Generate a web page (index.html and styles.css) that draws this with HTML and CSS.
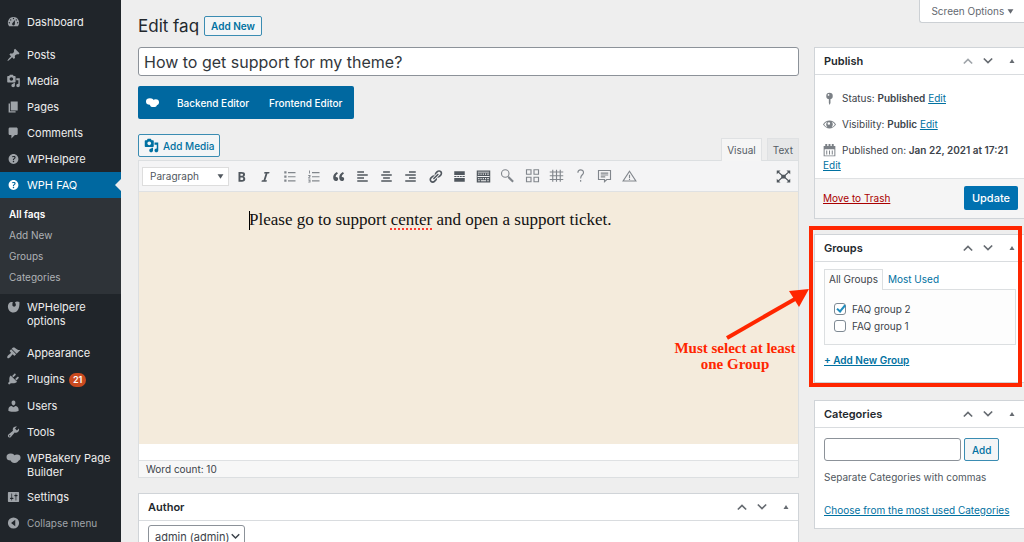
FILE: index.html
```html
<!DOCTYPE html>
<html lang="en">
<head>
<meta charset="utf-8">
<title>Edit faq</title>
<link rel="stylesheet" href="styles.css">
</head>
<body>
<svg class="sprite" aria-hidden="true">
  <symbol id="dashboard" viewBox="0 0 20 20"><path fill-rule="evenodd" d="M3.76 16h12.48A7.998 7.998 0 0 0 10 3a7.998 7.998 0 0 0-6.24 13zM10 4c.55 0 1 .45 1 1s-.45 1-1 1-1-.45-1-1 .45-1 1-1zM6 6c.55 0 1 .45 1 1s-.45 1-1 1-1-.45-1-1 .45-1 1-1zm8 0c.55 0 1 .45 1 1s-.45 1-1 1-1-.45-1-1 .45-1 1-1zm-5.37 5.55L12 7v6c0 1.1-.9 2-2 2s-2-.9-2-2c0-.57.24-1.08.63-1.45zM4 10c.55 0 1 .45 1 1s-.45 1-1 1-1-.45-1-1 .45-1 1-1zm12 0c.55 0 1 .45 1 1s-.45 1-1 1-1-.45-1-1 .45-1 1-1z"/></symbol>
  <symbol id="pin" viewBox="0 0 20 20"><path d="M10.44 3.02l1.82-1.82 6.36 6.35-1.83 1.82c-1.05-.68-2.48-.57-3.41.36l-.75.75c-.92.93-1.04 2.35-.35 3.41l-1.83 1.82-2.41-2.41-2.8 2.79c-.42.42-3.38 2.71-3.8 2.29s1.86-3.39 2.28-3.81l2.79-2.79L4.1 9.36l1.83-1.82c1.05.69 2.48.57 3.4-.36l.75-.75c.93-.92 1.05-2.35.36-3.41z"/></symbol>
  <symbol id="media" viewBox="0 0 20 20"><path fill-rule="evenodd" d="M13 11V4c0-.55-.45-1-1-1h-1.67L9 1H5L3.67 3H2c-.55 0-1 .45-1 1v7c0 .55.45 1 1 1h10c.55 0 1-.45 1-1zM7 4.5c1.38 0 2.5 1.12 2.5 2.5S8.38 9.5 7 9.5 4.5 8.38 4.5 7 5.62 4.5 7 4.5zM14 6h5v10.5c0 1.38-1.12 2.5-2.5 2.5S14 17.88 14 16.5s1.12-2.5 2.5-2.5c.17 0 .34.02.5.05V9h-3V6zm-4 8.05V13h2v3.5c0 1.38-1.12 2.5-2.5 2.5S7 17.88 7 16.5 8.12 14 9.5 14c.17 0 .34.02.5.05z"/></symbol>
  <symbol id="page" viewBox="0 0 20 20"><path d="M6 15V2h10v13H6zm-1 1h8v2H3V5h2v11z"/></symbol>
  <symbol id="comment" viewBox="0 0 20 20"><path d="M5 2h9c1.1 0 2 .9 2 2v7c0 1.1-.9 2-2 2h-2l-5 5v-5H5c-1.1 0-2-.9-2-2V4c0-1.1.9-2 2-2z"/></symbol>
  <symbol id="help" viewBox="0 0 20 20"><path fill-rule="evenodd" d="M17 10c0-3.87-3.14-7-7-7-3.87 0-7 3.13-7 7s3.13 7 7 7c3.86 0 7-3.13 7-7zm-6.3 1.48H9.14v-.43c0-.38.08-.7.24-.98s.46-.57.88-.89c.41-.29.68-.53.81-.71.14-.18.2-.39.2-.62 0-.25-.09-.44-.28-.58-.19-.13-.45-.19-.79-.19-.58 0-1.25.19-2 .57l-.64-1.28c.87-.49 1.8-.74 2.77-.74.81 0 1.45.2 1.92.58.48.39.71.91.71 1.55 0 .43-.09.8-.29 1.11-.19.32-.57.67-1.11 1.06-.38.28-.61.49-.71.63-.1.15-.15.34-.15.57v.35zm-1.47 2.74c-.18-.17-.27-.42-.27-.73 0-.33.08-.58.26-.75s.43-.25.77-.25c.32 0 .57.09.75.26s.27.42.27.74c0 .3-.09.55-.27.72-.18.18-.43.27-.75.27-.33 0-.58-.09-.76-.26z"/></symbol>
  <symbol id="options" viewBox="0 0 20 20"><path d="M9 3C5 2 2 5 2 9c0 5 3 9 8 9 6 0 9-6 8.500-15-2-1-5-1-6.500.5 1.500 1.500 2 4 .5 5.500-1.500 1.300-3.500.5-4-1C8.200 6.500 8.500 4.500 9 3z"/></symbol>
  <symbol id="brush" viewBox="0 0 20 20"><path d="M14.48 11.06L7.41 3.99l1.5-1.5c.5-.56 2.3-.47 3.51.32 1.21.8 1.43 1.28 2.91 2.1 1.18.64 2.45 1.26 4.45.85zm-.71.71L6.7 4.7 4.93 6.47c-.39.39-.39 1.02 0 1.41l1.06 1.06c.39.39.39 1.03 0 1.42-.6.6-1.43 1.11-2.21 1.69-.35.26-.7.53-1.01.84C1.43 14.23.4 16.08 1.4 17.07c.99 1 2.84-.03 4.18-1.36.31-.31.58-.66.85-1.02.57-.78 1.08-1.61 1.69-2.21.39-.39 1.02-.39 1.41 0l1.06 1.06c.39.39 1.02.39 1.41 0z"/></symbol>
  <symbol id="plug" viewBox="0 0 20 20"><path d="M13.11 4.36L9.87 7.6 8 5.73l3.24-3.24c.35-.34 1.05-.2 1.56.32.52.51.66 1.21.31 1.55zm-8 1.77l.91-1.12 9.01 9.01-1.19.84c-.71.71-2.63 1.16-3.82 1.16H6.14L4.9 17.26c-.59.59-1.54.59-2.12 0-.59-.58-.59-1.53 0-2.12l1.24-1.24v-3.88c0-1.13.4-3.19 1.09-3.89zm7.26 3.97l3.24-3.24c.34-.35 1.04-.21 1.55.31.52.51.66 1.21.31 1.55l-3.24 3.25z"/></symbol>
  <symbol id="user" viewBox="0 0 20 20"><path d="M10 9.25c-2.27 0-2.73-3.44-2.73-3.44C7 4.02 7.82 2 9.97 2c2.16 0 2.98 2.02 2.71 3.81 0 0-.41 3.44-2.68 3.44zm0 2.57L12.72 10c2.39 0 4.52 2.33 4.52 4.53v2.49s-3.65 1.13-7.24 1.13c-3.65 0-7.24-1.13-7.24-1.13v-2.49c0-2.25 1.94-4.48 4.47-4.48z"/></symbol>
  <symbol id="wrench" viewBox="0 0 20 20"><path fill-rule="evenodd" d="M16.68 9.77c-1.34 1.34-3.3 1.67-4.95.99l-5.41 6.52c-.99.99-2.59.99-3.58 0s-.99-2.59 0-3.57l6.52-5.42c-.68-1.65-.35-3.61.99-4.95 1.28-1.28 3.12-1.62 4.72-1.06l-2.89 2.89 2.82 2.82 2.86-2.87c.53 1.58.18 3.39-1.08 4.65zM3.81 16.21c.4.39 1.04.39 1.43 0 .4-.4.4-1.04 0-1.43-.39-.4-1.03-.4-1.43 0-.39.39-.39 1.03 0 1.43z"/></symbol>
  <symbol id="bakery" viewBox="0 0 20 20"><ellipse cx="6" cy="8.500" rx="6" ry="5"/><ellipse cx="15" cy="9.500" rx="5" ry="4.500"/><ellipse cx="11.500" cy="12.500" rx="5.500" ry="4.500"/></symbol>
  <symbol id="sliders" viewBox="0 0 20 20"><path fill-rule="evenodd" d="M18 16V4c0-.55-.45-1-1-1H3c-.55 0-1 .45-1 1v12c0 .55.45 1 1 1h14c.55 0 1-.45 1-1zM8 11h1c.55 0 1 .45 1 1s-.45 1-1 1H8v1.5c0 .28-.22.5-.5.5s-.5-.22-.5-.5V13H6c-.55 0-1-.45-1-1s.45-1 1-1h1V5.500c0-.28.22-.5.5-.5s.5.22.5.5V11zm5-2h-1c-.55 0-1-.45-1-1s.45-1 1-1h1V5.500c0-.28.22-.5.5-.5s.5.22.5.5V7h1c.55 0 1 .45 1 1s-.45 1-1 1h-1v5.500c0 .28-.22.5-.5.5s-.5-.22-.5-.5V9z"/></symbol>
  <symbol id="collapse" viewBox="0 0 20 20"><path fill-rule="evenodd" d="M10 2a8 8 0 1 0 0 16 8 8 0 0 0 0-16zm2.500 3.500v9L6.500 10z"/></symbol>
  <symbol id="bold" viewBox="0 0 20 20"><path fill-rule="evenodd" d="M6 4v13h4.54c1.37 0 2.46-.33 3.26-1 .8-.66 1.2-1.58 1.2-2.77 0-.84-.17-1.51-.51-2.01s-.9-.85-1.67-1.03v-.09c.57-.1 1.02-.4 1.36-.9s.51-1.13.51-1.91c0-1.14-.39-1.98-1.17-2.5C12.75 4.26 11.5 4 9.78 4H6zm2.57 5.15V6.26h1.36c.73 0 1.27.11 1.61.32.34.22.51.58.51 1.07 0 .54-.16.92-.47 1.15s-.82.35-1.51.35h-1.5zm0 2.19h1.6c1.44 0 2.16.53 2.16 1.61 0 .6-.17 1.05-.51 1.34s-.86.43-1.57.43H8.57v-3.38z"/></symbol>
  <symbol id="italic" viewBox="0 0 20 20"><path d="M14.78 6h-2.130l-2.800 9h2.120l-.62 2H4.600l.62-2h2.140l2.800-9H8.030l.62-2h6.750z"/></symbol>
  <symbol id="bullets" viewBox="0 0 20 20"><path d="M3 3h3v3H3zM3 8.500h3v3H3zM3 14h3v3H3zM8 4h10v1.500H8zM8 9.500h10V11H8zM8 15h10v1.500H8z"/></symbol>
  <symbol id="numbers" viewBox="0 0 20 20"><path d="M4 2h1.200v4H4zM3 8h3v2l-1.500 1.500H6v1H3v-1.300L4.800 9.200H3zM3 14h3v4H3v-1h1.800v-.6H3.500v-1h1.300V15H3zM8 4h10v1.500H8zM8 9.500h10V11H8zM8 15h10v1.500H8z"/></symbol>
  <symbol id="quote" viewBox="0 0 20 20"><path d="M9.49 13.22c0-.74-.2-1.38-.61-1.9-.62-.78-1.83-.88-2.53-.72-.29-1.65 1.11-3.75 2.92-4.65L7.88 4c-2.73 1.3-5.42 4.28-4.96 8.05C3.21 14.43 4.59 16 6.54 16c.85 0 1.56-.25 2.12-.75s.83-1.18.83-2.03zm8.05 0c0-.74-.2-1.38-.61-1.9-.63-.78-1.83-.88-2.53-.72-.29-1.65 1.11-3.75 2.92-4.65L15.93 4c-2.73 1.3-5.41 4.28-4.95 8.05.29 2.38 1.66 3.95 3.61 3.95.85 0 1.56-.25 2.12-.75s.83-1.18.83-2.03z"/></symbol>
  <symbol id="left" viewBox="0 0 20 20"><path d="M3 3h9v2H3zM3 7h14v2H3zM3 11h9v2H3zM3 15h14v2H3z"/></symbol>
  <symbol id="center" viewBox="0 0 20 20"><path d="M5.500 3h9v2h-9zM3 7h14v2H3zM5.500 11h9v2h-9zM3 15h14v2H3z"/></symbol>
  <symbol id="right" viewBox="0 0 20 20"><path d="M8 3h9v2H8zM3 7h14v2H3zM8 11h9v2H8zM3 15h14v2H3z"/></symbol>
  <symbol id="link" viewBox="0 0 20 20"><path d="M17.74 2.76c1.68 1.69 1.68 4.41 0 6.1l-1.53 1.52c-1.12 1.12-2.7 1.47-4.14 1.09l2.62-2.61.76-.77.76-.76c.84-.84.84-2.2 0-3.04-.84-.85-2.2-.85-3.04 0l-.77.76-3.38 3.38c-.37-1.44-.02-3.02 1.1-4.14l1.52-1.53c1.69-1.68 4.42-1.68 6.1 0zM8.59 13.43l5.34-5.34c.42-.42.42-1.1 0-1.52-.44-.43-1.13-.39-1.53 0l-5.33 5.34c-.42.42-.42 1.1 0 1.52.44.43 1.13.39 1.52 0zm-.76 2.29l4.14-4.15c.38 1.44.03 3.02-1.09 4.14l-1.52 1.53c-1.69 1.68-4.41 1.68-6.1 0-1.68-1.68-1.68-4.42 0-6.1l1.53-1.52c1.12-1.12 2.7-1.47 4.14-1.1l-4.14 4.15c-.85.84-.85 2.2 0 3.05.84.84 2.2.84 3.04 0z"/></symbol>
  <symbol id="more" viewBox="0 0 20 20"><path d="M3 3h14v5H3zM3 12h14v5H3zM3 9.200h3v1.600H3zM7 9.200h2.500v1.600H7zM10.500 9.200H13v1.600h-2.500zM14 9.200h3v1.600h-3z"/></symbol>
  <symbol id="keyboard" viewBox="0 0 20 20"><path fill-rule="evenodd" d="M1 2h18v16H1zM2.500 3.500v1h15v-1zM3 6v1.500h1.500V6zM6 6v1.500h1.500V6zM9 6v1.500h1.500V6zM12 6v1.500h1.500V6zM15 6v1.500h2V6zM2 9.200v1.300h16V9.200zM3 12v1.500h1.500V12zM6 12v1.500h1.500V12zM9 12v1.500h1.500V12zM12 12v1.500h1.500V12zM15 12v1.500h2V12zM3 15v1.300h2V15zM6.500 15v1.300h7V15zM15 15v1.300h2V15z"/></symbol>
  <symbol id="search" viewBox="0 0 20 20"><circle cx="7" cy="6" r="5" fill="none" stroke="currentColor" stroke-width="1.500"/><path d="M10.500 9.500l2 .5 6 6-2 2-6-6z"/></symbol>
  <symbol id="blocks" viewBox="0 0 20 20"><path fill="none" stroke="currentColor" stroke-width="1.500" d="M2 1h6v6H2zM12 1h6v6h-6zM2 11h6v6H2zM12 11h6v6h-6z"/></symbol>
  <symbol id="grid" viewBox="0 0 20 20"><path fill="none" stroke="currentColor" stroke-width="1.500" d="M5 1v16M10 1v16M15 1v16M1 4h18M1 9h18M1 14h18"/></symbol>
  <symbol id="question" viewBox="0 0 20 20"><path fill="none" stroke="currentColor" stroke-width="1.500" d="M6.500 5c0-5 7.500-5 7.500-.5 0 3.500-3.800 3-3.800 8M10.200 14.500v2.500"/></symbol>
  <symbol id="note" viewBox="0 0 20 20"><path fill="none" stroke="currentColor" stroke-width="1.500" d="M2 2h16v12h-5l-3 3v-3H2zM5 5.500h10M5 8h10M5 10.500h6"/></symbol>
  <symbol id="warning" viewBox="0 0 20 20"><path fill="none" stroke="currentColor" stroke-width="1.500" d="M10 3l8.500 13h-17zM10 7.500V12M10 13v1.500"/></symbol>
  <symbol id="fullscreen" viewBox="0 0 20 20"><path d="M1 2h5L1 7zM19 2v5l-5-5zM1 18v-5l5 5zM19 18h-5l5-5zM7 7.500h6v5H7z"/><path fill="none" stroke="currentColor" stroke-width="1.600" d="M3 4l5 4.500M17 4l-5 4.500M3 16l5-4.500M17 16l-5-4.500"/></symbol>
  <symbol id="status" viewBox="0 0 20 20"><circle cx="10" cy="6" r="5"/><path d="M9 10h2.500v7l-1.500 3-1-3z"/><circle cx="8.500" cy="4.500" r="1.300" fill="#fff"/></symbol>
  <symbol id="eye" viewBox="0 0 20 20"><path fill-rule="evenodd" d="M0 10c2.200-3.700 6-6 10-6s7.800 2.300 10 6c-2.200 3.700-6 6-10 6S2.200 13.700 0 10zm1.800 0c1.200 2 3 3.400 5 4.100-2.600-2.400-2.600-5.800 0-8.200-2 .7-3.800 2.100-5 4.100zm16.400 0c-1.200-2-3-3.400-5-4.100 2.600 2.400 2.600 5.800 0 8.200 2-.7 3.800-2.100 5-4.100zM9 6.500a2 2 0 1 0 0 4 2 2 0 0 0 0-4z"/></symbol>
  <symbol id="calendar" viewBox="0 0 20 20"><path fill-rule="evenodd" d="M1 3h2.500V0h3v3h2V0h3v3h2V0h3v3H19v16H1zm1.500 5v9.500h15V8zM5 10h1.500v6H5zM9.300 10h1.500v6H9.300zM13.500 10H15v6h-1.500z"/></symbol>
  <symbol id="up" viewBox="0 0 12 12"><path fill="none" stroke="currentColor" stroke-width="2" d="M1 9l5-5 5 5"/></symbol>
  <symbol id="down" viewBox="0 0 12 12"><path fill="none" stroke="currentColor" stroke-width="2" d="M1 3l5 5 5-5"/></symbol>
  <symbol id="tri-up" viewBox="0 0 12 12"><path d="M6 2l5 8H1z"/></symbol>
  <symbol id="tri-down" viewBox="0 0 12 12"><path d="M1 2h10L6 10z"/></symbol>
</svg>
<div class="app">
  <nav class="sidebar" aria-label="Main menu">
    <a class="item" href="#"><svg class="icon"><use href="#dashboard"/></svg><span>Dashboard</span></a>
    <a class="item section" href="#"><svg class="icon"><use href="#pin"/></svg><span>Posts</span></a>
    <a class="item" href="#"><svg class="icon"><use href="#media"/></svg><span>Media</span></a>
    <a class="item" href="#"><svg class="icon"><use href="#page"/></svg><span>Pages</span></a>
    <a class="item" href="#"><svg class="icon"><use href="#comment"/></svg><span>Comments</span></a>
    <a class="item" href="#"><svg class="icon"><use href="#help"/></svg><span>WPHelpere</span></a>
    <a class="item current" href="#"><svg class="icon"><use href="#help"/></svg><span>WPH FAQ</span></a>
    <div class="submenu">
      <a class="active" href="#">All faqs</a>
      <a href="#">Add New</a>
      <a href="#">Groups</a>
      <a href="#">Categories</a>
    </div>
    <a class="item tall" href="#"><svg class="icon"><use href="#options"/></svg><span>WPHelpere options</span></a>
    <a class="item section" href="#"><svg class="icon"><use href="#brush"/></svg><span>Appearance</span></a>
    <a class="item" href="#"><svg class="icon"><use href="#plug"/></svg><span>Plugins <b class="count">21</b></span></a>
    <a class="item" href="#"><svg class="icon"><use href="#user"/></svg><span>Users</span></a>
    <a class="item" href="#"><svg class="icon"><use href="#wrench"/></svg><span>Tools</span></a>
    <a class="item tall" href="#"><svg class="icon"><use href="#bakery"/></svg><span>WPBakery Page Builder</span></a>
    <a class="item" href="#"><svg class="icon"><use href="#sliders"/></svg><span>Settings</span></a>
    <button class="item collapse" type="button"><svg class="icon"><use href="#collapse"/></svg><span>Collapse menu</span></button>
  </nav>

  <div class="content">
    <main class="primary">
      <header class="heading">
        <h1>Edit faq</h1>
        <a class="button small" href="#">Add New</a>
      </header>
      <input class="title" type="text" aria-label="Title" value="How to get support for my theme?">
      <div class="switcher">
        <svg class="icon"><use href="#bakery"/></svg>
        <button type="button">Backend Editor</button>
        <button type="button">Frontend Editor</button>
      </div>

      <section class="editor">
        <div class="editor-top">
          <button class="button add-media" type="button"><svg class="icon"><use href="#media"/></svg>Add Media</button>
          <div class="modes">
            <button class="mode on" type="button">Visual</button>
            <button class="mode" type="button">Text</button>
          </div>
        </div>
        <div class="frame">
          <div class="toolbar">
            <div class="format">
              <select aria-label="Format"><option>Paragraph</option></select>
              <svg><use href="#tri-down"/></svg>
            </div>
            <div class="tools">
              <button type="button" aria-label="Bold"><svg><use href="#bold"/></svg></button>
              <button type="button" aria-label="Italic"><svg><use href="#italic"/></svg></button>
              <button class="thin" type="button" aria-label="Bulleted list"><svg><use href="#bullets"/></svg></button>
              <button class="thin" type="button" aria-label="Numbered list"><svg><use href="#numbers"/></svg></button>
              <button type="button" aria-label="Blockquote"><svg><use href="#quote"/></svg></button>
              <button type="button" aria-label="Align left"><svg><use href="#left"/></svg></button>
              <button type="button" aria-label="Align center"><svg><use href="#center"/></svg></button>
              <button type="button" aria-label="Align right"><svg><use href="#right"/></svg></button>
              <button type="button" aria-label="Link"><svg><use href="#link"/></svg></button>
              <button type="button" aria-label="Read more"><svg><use href="#more"/></svg></button>
              <button type="button" aria-label="Toolbar toggle"><svg><use href="#keyboard"/></svg></button>
              <button class="thin" type="button" aria-label="Find"><svg><use href="#search"/></svg></button>
              <button class="thin" type="button" aria-label="Blocks"><svg><use href="#blocks"/></svg></button>
              <button class="thin" type="button" aria-label="Grid"><svg><use href="#grid"/></svg></button>
              <button class="thin" type="button" aria-label="Help"><svg><use href="#question"/></svg></button>
              <button class="thin" type="button" aria-label="Note"><svg><use href="#note"/></svg></button>
              <button class="thin" type="button" aria-label="Warning"><svg><use href="#warning"/></svg></button>
            </div>
            <button class="full" type="button" aria-label="Fullscreen"><svg><use href="#fullscreen"/></svg></button>
          </div>
          <div class="canvas">
            <p><span class="caret"></span>Please go to support <span class="typo">center</span> and open a support ticket.</p>
          </div>
          <div class="status">Word count: 10</div>
        </div>
      </section>

      <section class="box author">
        <div class="box-head">
          <h2>Author</h2>
          <div class="handles">
            <button type="button" aria-label="Move up"><svg><use href="#up"/></svg></button>
            <button type="button" aria-label="Move down"><svg><use href="#down"/></svg></button>
            <button type="button" aria-label="Toggle"><svg><use href="#tri-up"/></svg></button>
          </div>
        </div>
        <div class="author-body">
          <div class="picker">
            <select aria-label="Author"><option>admin (admin)</option></select>
            <svg><use href="#down"/></svg>
          </div>
        </div>
      </section>
    </main>

    <aside class="side">
      <button class="screen-options" type="button">Screen Options <svg><use href="#tri-down"/></svg></button>

      <section class="box">
        <div class="box-head">
          <h2>Publish</h2>
          <div class="handles">
            <button class="dim" type="button" aria-label="Move up"><svg><use href="#up"/></svg></button>
            <button type="button" aria-label="Move down"><svg><use href="#down"/></svg></button>
            <button type="button" aria-label="Toggle"><svg><use href="#tri-up"/></svg></button>
          </div>
        </div>
        <div class="publish">
          <p><svg class="icon"><use href="#status"/></svg>Status: <b>Published</b> <a href="#">Edit</a></p>
          <p><svg class="icon"><use href="#eye"/></svg>Visibility: <b>Public</b> <a href="#">Edit</a></p>
          <p><svg class="icon"><use href="#calendar"/></svg>Published on: <b>Jan 22, 2021 at 17:21</b> <a href="#">Edit</a></p>
        </div>
        <div class="publish-foot">
          <a class="trash" href="#">Move to Trash</a>
          <button class="update" type="button">Update</button>
        </div>
      </section>

      <section class="box groups">
        <div class="box-head">
          <h2>Groups</h2>
          <div class="handles">
            <button type="button" aria-label="Move up"><svg><use href="#up"/></svg></button>
            <button type="button" aria-label="Move down"><svg><use href="#down"/></svg></button>
            <button type="button" aria-label="Toggle"><svg><use href="#tri-up"/></svg></button>
          </div>
        </div>
        <div class="groups-body">
          <div class="tabs">
            <a class="tab on" href="#">All Groups</a>
            <a class="tab" href="#">Most Used</a>
          </div>
          <div class="panel">
            <label><input type="checkbox" checked>FAQ group 2</label>
            <label><input type="checkbox">FAQ group 1</label>
          </div>
          <a class="add-group" href="#">+ Add New Group</a>
        </div>
        <div class="highlight"></div>
        <svg class="arrow" viewBox="0 0 84 52"><path d="M2 50L70 11" fill="none" stroke="#ff2600" stroke-width="4"/><path d="M84 1L64 3l10 16z" fill="#ff2600"/></svg>
        <p class="note">Must select at least one Group</p>
      </section>

      <section class="box">
        <div class="box-head">
          <h2>Categories</h2>
          <div class="handles">
            <button type="button" aria-label="Move up"><svg><use href="#up"/></svg></button>
            <button type="button" aria-label="Move down"><svg><use href="#down"/></svg></button>
            <button type="button" aria-label="Toggle"><svg><use href="#tri-up"/></svg></button>
          </div>
        </div>
        <div class="categories">
          <div class="add-row">
            <input type="text" aria-label="Add Categories">
            <button class="button" type="button">Add</button>
          </div>
          <p>Separate Categories with commas</p>
          <a href="#">Choose from the most used Categories</a>
        </div>
      </section>
    </aside>
  </div>
</div>
</body>
</html>
```
FILE: styles.css
```css
* { box-sizing: border-box; }
body { margin: 0; background: #eee; color: #3c434a; font: 10px/14px Inter, "Liberation Sans", sans-serif; }
button, input, select { font: inherit; color: inherit; margin: 0; }
button { cursor: pointer; }
h1, h2, p { margin: 0; font-weight: 400; }
a { color: #0071a1; }
svg { fill: currentColor; flex: none; }
.sprite { position: absolute; width: 0; height: 0; }
.icon { width: 15px; height: 15px; }
.app { display: flex; height: 100vh; overflow: hidden; }

.sidebar { width: 121px; flex: none; background: #20252a; padding-top: 9px; }
.item { display: flex; width: 100%; gap: 6px; padding: 6px 8px 6px 6px; border: 0; background: none; color: #eee; font-size: 11px; line-height: 14px; text-align: left; text-decoration: none; }
.item .icon { height: 14px; color: #9ea3a8; }
.tall { padding-bottom: 5px; }
.section { margin-top: 7px; }
.current { position: relative; background: #0068a0; color: #fff; }
.current .icon { color: #fff; }
.current::after { content: ""; position: absolute; right: 0; top: 7px; border: 6px solid transparent; border-left: 0; border-right-color: #eee; }
.submenu { background: #2e3338; padding: 6px 9px; display: flex; flex-direction: column; font-size: 10px; line-height: 21px; }
.submenu a { color: #aeb2b6; text-decoration: none; }
.submenu .active { color: #fff; font-weight: 600; }
.count { display: inline-block; background: #ca4a1f; color: #fff; border-radius: 7px; padding: 0 4px; margin-left: 1px; font-size: 9px; font-weight: 600; }
.collapse { color: #a0a5aa; font-size: 10px; }

.content { flex: 1; min-width: 0; display: flex; gap: 15px; padding-left: 17px; }
.primary { flex: 1; min-width: 0; padding-top: 15px; }
.heading { display: flex; align-items: center; gap: 5px; height: 22px; margin-bottom: 10px; }
h1 { font-size: 17px; line-height: 22px; color: #23282d; }
.button { border: 1px solid #3a8cb2; border-radius: 2px; background: #f3f5f6; color: #0071a1; text-decoration: none; font-weight: 500; }
.small { padding: 2px 6px; font-weight: 600; }
.title { display: block; width: 100%; height: 29px; border: 1px solid #8c9299; border-radius: 3px; background: #fff; padding: 0 5px; font-size: 16px; color: #32373c; }
.switcher { display: flex; width: fit-content; align-items: center; height: 33px; margin-top: 10px; padding: 0 12px 0 8px; border-radius: 2px; background: #0068a0; color: #fff; }
.switcher .icon { width: 13px; height: 13px; margin-right: 18px; }
.switcher button { border: 0; background: none; padding: 0; font-weight: 500; margin-right: 20px; }
.switcher button:last-child { margin-right: 0; }

.editor { margin-top: 15px; }
.editor-top { display: flex; justify-content: space-between; align-items: flex-start; height: 26px; }
.add-media { display: flex; align-items: center; gap: 4px; height: 23px; padding: 0 5px; }
.modes { display: flex; gap: 5px; align-self: flex-end; }
.mode { height: 22px; padding: 0 5px; border: 1px solid #dfe1e3; border-bottom: 0; background: #e6e7e8; color: #555d66; }
.mode.on { position: relative; height: 23px; margin-bottom: -1px; background: #f5f5f5; }
.frame { border: 1px solid #dcdfe1; background: #fff; }
.toolbar { display: flex; align-items: center; height: 31px; padding: 0 3px; background: #f4f4f5; border-bottom: 1px solid #dfe1e3; color: #50575e; }
.toolbar button { border: 0; background: none; padding: 0; width: 24px; height: 24px; display: grid; place-items: center; }
.toolbar button svg { width: 15px; height: 15px; }
.toolbar .thin { color: #81868c; }
.tools { flex: 0 1 412px; display: flex; justify-content: space-between; }
.toolbar .full { margin-left: auto; }
.format, .picker { display: inline-grid; align-items: center; }
.format select, .picker select { grid-area: 1 / 1; appearance: none; background: #fff; }
.format svg, .picker svg { grid-area: 1 / 1; justify-self: end; pointer-events: none; }
.format select { width: 87px; height: 19px; border: 1px solid #ddd; padding: 0 7px; }
.format svg { width: 7px; height: 7px; margin-right: 5px; }
.canvas { height: 252px; background: #f4ebdc; padding: 16px 110px; margin-bottom: 16px; color: #111; font: 17px/24px "Liberation Serif", serif; }
.caret { display: inline-block; width: 1px; height: 19px; margin-right: -1px; background: #000; vertical-align: -5px; }
.typo { text-decoration: underline dotted #ff3b30 2px; text-underline-offset: 3px; }
.status { border-top: 1px solid #dfe1e3; background: #f7f7f7; padding: 1px 7px; }

.box { position: relative; border: 1px solid #d0d4d8; background: #fff; }
.box-head { display: flex; align-items: center; justify-content: space-between; height: 27px; padding: 0 4px 0 9px; border-bottom: 1px solid #d9dcdf; }
h2 { font-size: 11px; font-weight: 600; color: #23282d; }
.handles { display: flex; }
.handles button { border: 0; background: none; padding: 0; width: 20px; height: 20px; display: grid; place-items: center; color: #666b71; }
.handles svg { width: 10px; height: 10px; }
.handles button:last-child { margin-left: 6px; width: 16px; }
.handles button:last-child svg { width: 6px; height: 6px; }
.handles .dim { color: #a0a5aa; }
.author { margin-top: 15px; }
.author-body { padding: 4px 9px; }
.picker select { width: 97px; height: 23px; padding: 0 6px; border: 1px solid #8c9299; border-radius: 3px; font-size: 11px; }
.picker svg { width: 9px; height: 9px; margin-right: 5px; }

.side { flex: 0 0 210px; display: flex; flex-direction: column; }
.screen-options { align-self: flex-end; height: 23px; margin-bottom: 24px; padding: 0 10px 0 11px; border: 1px solid #ccd0d4; border-width: 0 0 1px 1px; border-radius: 0 0 0 3px; background: #fff; color: #646970; }
.screen-options svg { width: 7px; height: 7px; }
.side .box { border-right: 0; }
.side .box + .box { margin-top: 15px; }
.publish { padding: 16px 8px 5px; line-height: 15px; }
.publish p { margin-bottom: 11px; }
.publish p:last-child { margin: 0; }
.publish .icon { width: 13px; height: 13px; margin-right: 6px; vertical-align: -3px; color: #7b8086; }
b { font-weight: 600; }
.publish-foot { display: flex; justify-content: space-between; align-items: center; padding: 7px 6px 8px 8px; border-top: 1px solid #dfe1e3; background: #f5f5f5; }
.trash { color: #a00; }
.update { height: 24px; padding: 0 8px; border: 0; border-radius: 2px; background: #0071b0; color: #fff; font-weight: 500; font-size: 11px; }
.groups-body { padding: 7px 8px 15px 9px; }
.tabs { display: flex; }
.tab { height: 20px; padding: 2px 4px; border: 1px solid transparent; text-decoration: none; }
.tab.on { position: relative; margin-bottom: -1px; height: 21px; border-color: #dcdfe1; border-bottom: 0; background: #fdfdfd; color: #3c434a; }
.panel { display: flex; flex-direction: column; border: 1px solid #dcdfe1; background: #fdfdfd; height: 56px; padding: 10px 9px; margin-bottom: 8px; }
.panel label { display: flex; align-items: center; gap: 6px; height: 18px; }
.panel input { appearance: none; width: 12px; height: 12px; border: 1px solid #7e8993; border-radius: 3px; background: #fff; display: grid; place-items: center; }
.panel input:checked::before { content: ""; width: 3px; height: 7px; border: solid #1e8cbe; border-width: 0 2px 2px 0; transform: rotate(40deg) translateY(-1px); }
.add-group { font-weight: 600; }
.highlight { position: absolute; inset: -9px 2px -5px -6px; border: 4px solid #ff2600; pointer-events: none; }
.arrow { position: absolute; width: 84px; height: 52px; left: -90px; top: 53px; }
.note { position: absolute; left: -148px; top: 105px; width: 136px; text-align: center; color: #ff2600; font: bold 15px/16px "Liberation Serif", serif; }
.side .groups + .box { margin-top: 17px; }
.categories { padding: 10px 9px 11px; }
.add-row { display: flex; gap: 3px; }
.add-row input { width: 137px; height: 23px; border: 1px solid #8c9299; border-radius: 3px; background: #fff; }
.add-row .button { height: 23px; padding: 0 7px; }
.categories p { margin: 9px 0 19px; color: #50575e; }
```
